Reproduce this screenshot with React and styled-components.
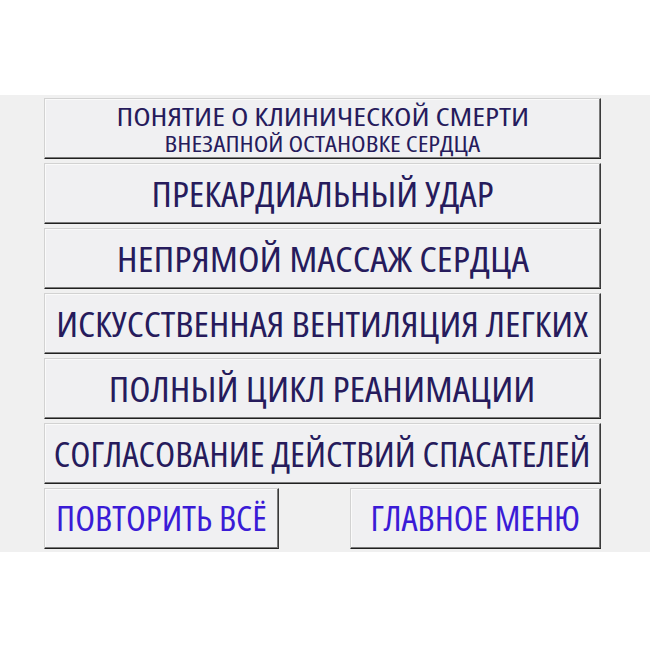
import React from "react";
import styled, { createGlobalStyle } from "styled-components";

const Global = createGlobalStyle`
  html, body { margin: 0; padding: 0; background: #ffffff; }
  body { font-family: "Open Sans", "Noto Sans", sans-serif; }
`;

const Page = styled.div`
  width: 650px;
  height: 650px;
  padding-top: 95px;
  box-sizing: border-box;
`;

const Panel = styled.div`
  background: #f0f0f0;
  height: 457px;
  box-sizing: border-box;
  padding: 3px 49px 0 44px;
  display: flex;
  flex-direction: column;
  gap: 4px;
`;

const Btn = styled.div`
  height: 61px;
  box-sizing: border-box;
  background: #f0f0f2;
  border-top: 1px solid #d2d2d2;
  border-left: 1px solid #d2d2d2;
  border-right: 1px solid #3a3a3a;
  border-bottom: 1px solid #202020;
  box-shadow: inset -1px -1px 0 #7a7a7a, inset 1px 1px 0 #fafafa;
  display: flex;
  flex-direction: column;
  align-items: center;
  justify-content: center;
  width: ${(p) => p.$w || "auto"};
`;

const Label = styled.span`
  display: block;
  white-space: nowrap;
  color: ${(p) => p.$color || "#261b5c"};
  font-size: ${(p) => p.$size}px;
  line-height: ${(p) => p.$lh || 1.2};
  font-stretch: 75%;
  transform: scaleX(${(p) => p.$sx || 1.1});
`;

const Row = styled.div`
  display: flex;
  justify-content: space-between;
`;

export default function App() {
  return (
    <Page>
      <Global />
      <Panel>
        <Btn>
          <Label $size={26} $lh={1.16} $sx={1.23}>ПОНЯТИЕ О КЛИНИЧЕСКОЙ СМЕРТИ</Label>
          <Label $size={22} $lh={1.16} $sx={1.22}>ВНЕЗАПНОЙ ОСТАНОВКЕ СЕРДЦА</Label>
        </Btn>
        <Btn>
          <Label $size={35} $sx={1.106}>ПРЕКАРДИАЛЬНЫЙ УДАР</Label>
        </Btn>
        <Btn>
          <Label $size={35} $sx={1.133}>НЕПРЯМОЙ МАССАЖ СЕРДЦА</Label>
        </Btn>
        <Btn>
          <Label $size={35} $sx={1.103}>ИСКУССТВЕННАЯ ВЕНТИЛЯЦИЯ ЛЕГКИХ</Label>
        </Btn>
        <Btn>
          <Label $size={35} $sx={1.116}>ПОЛНЫЙ ЦИКЛ РЕАНИМАЦИИ</Label>
        </Btn>
        <Btn>
          <Label $size={35} $sx={1.06}>СОГЛАСОВАНИЕ ДЕЙСТВИЙ СПАСАТЕЛЕЙ</Label>
        </Btn>
        <Row>
          <Btn $w="235px">
            <Label $size={34} $sx={1.07} $color="#3a1bd6">ПОВТОРИТЬ ВСЁ</Label>
          </Btn>
          <Btn $w="251px">
            <Label $size={34} $sx={1.066} $color="#3a1bd6">ГЛАВНОЕ МЕНЮ</Label>
          </Btn>
        </Row>
      </Panel>
    </Page>
  );
}
